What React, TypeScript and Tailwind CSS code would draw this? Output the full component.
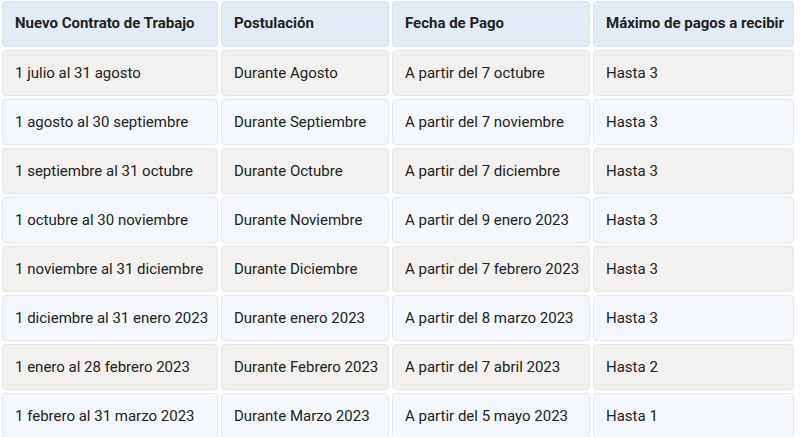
const rows = [
  ['1 julio al 31 agosto', 'Durante Agosto', 'A partir del 7 octubre', 'Hasta 3'],
  ['1 agosto al 30 septiembre', 'Durante Septiembre', 'A partir del 7 noviembre', 'Hasta 3'],
  ['1 septiembre al 31 octubre', 'Durante Octubre', 'A partir del 7 diciembre', 'Hasta 3'],
  ['1 octubre al 30 noviembre', 'Durante Noviembre', 'A partir del 9 enero 2023', 'Hasta 3'],
  ['1 noviembre al 31 diciembre', 'Durante Diciembre', 'A partir del 7 febrero 2023', 'Hasta 3'],
  ['1 diciembre al 31 enero 2023', 'Durante enero 2023', 'A partir del 8 marzo 2023', 'Hasta 3'],
  ['1 enero al 28 febrero 2023', 'Durante Febrero 2023', 'A partir del 7 abril 2023', 'Hasta 2'],
  ['1 febrero al 31 marzo 2023', 'Durante Marzo 2023', 'A partir del 5 mayo 2023', 'Hasta 1'],
];

const headers = ['Nuevo Contrato de Trabajo', 'Postulación', 'Fecha de Pago', 'Máximo de pagos a recibir'];

export default function App() {
  return (
    <div className="w-[800px] h-[437px] overflow-hidden bg-white font-['Roboto',sans-serif] text-[15px] text-[#222]">
      <table className="w-[798px] -mt-[2px] -ml-[1px] border-separate border-spacing-[3px] table-fixed">
        <colgroup>
          <col className="w-[216px]" />
          <col className="w-[168px]" />
          <col className="w-[198px]" />
          <col className="w-[201px]" />
        </colgroup>
        <thead>
          <tr>
            {headers.map((h) => (
              <th
                key={h}
                className="h-[46px] px-3 pb-[1px] text-left font-bold bg-[#e3ecf6] border border-[#d9e3ee] rounded-[4px] whitespace-nowrap"
              >
                {h}
              </th>
            ))}
          </tr>
        </thead>
        <tbody>
          {rows.map((r, i) => (
            <tr key={i}>
              {r.map((c, j) => (
                <td
                  key={j}
                  className={
                    'h-[46px] px-3 text-left border rounded-[4px] whitespace-nowrap ' +
                    (i % 2 === 0 ? 'bg-[#f2f1ef] border-[#e6e6e6]' : 'bg-[#f4f8fc] border-[#e3e9f0]')
                  }
                >
                  {c}
                </td>
              ))}
            </tr>
          ))}
        </tbody>
      </table>
    </div>
  );
}
